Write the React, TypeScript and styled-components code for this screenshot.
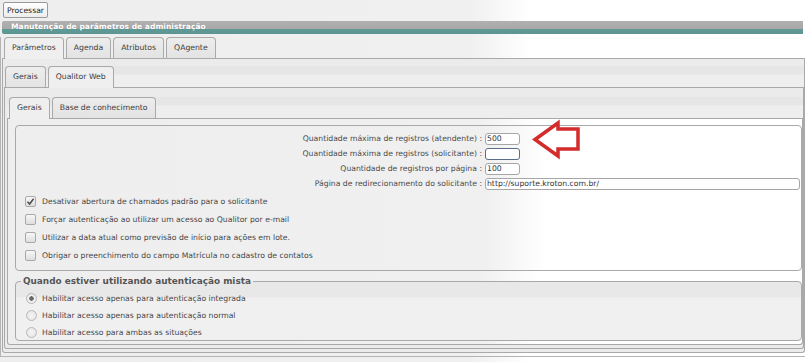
import React from 'react';
import styled, { createGlobalStyle } from 'styled-components';

const Global = createGlobalStyle`
  html, body { margin: 0; padding: 0; background: #ffffff; }
  body {
    font-family: "DejaVu Sans", Verdana, sans-serif;
    font-size: 7.7px;
    color: #444;
    width: 805px;
    height: 362px;
    overflow: hidden;
  }
  * { box-sizing: border-box; }
`;

const pageBg = 'linear-gradient(to right, #eeeeee 0px, #f0f0f0 470px, #ffffff 530px)';

const Page = styled.div`
  width: 805px;
  height: 362px;
  overflow: hidden;
  background: ${pageBg};
`;

const TopBar = styled.div`
  height: 21px;
  padding: 2px 0 0 3px;
`;

const ActionButton = styled.button`
  height: 16px;
  width: 45px;
  padding: 0;
  font-family: "DejaVu Sans", Verdana, sans-serif;
  font-size: 7.7px;
  color: #222;
  background: linear-gradient(#ffffff, #ededed);
  border: 1px solid #9a9a9a;
  border-radius: 2px;
`;

const TitleBar = styled.div`
  margin-left: 2px;
  width: 801px;
  height: 13px;
  background: linear-gradient(#b0b0b0 0, #a8a8a8 8px, #5f9a96 8px, #5c9692 13px);
  border-radius: 2px 0 0 2px;
  color: #fff;
  font-weight: bold;
  font-size: 7.6px;
  line-height: 12px;
  padding-left: 9px;
  text-shadow: 0 0 1px rgba(0, 0, 0, 0.25);
`;

const Frame = styled.div`
  margin-top: 3px;
  border-left: 1px solid #b4b4b4;
  border-bottom: 1px solid #b4b4b4;
  padding-bottom: 3px;
  width: 805px;
`;

const TabGroup = styled.div<{ $inset: number }>`
  margin-left: ${p => p.$inset}px;
`;

const TabStrip = styled.div<{ $plain?: boolean; $pad: number }>`
  display: flex;
  align-items: flex-end;
  gap: 2px;
  height: 22px;
  padding-left: ${p => p.$pad}px;
  border-bottom: 1px solid #a9a9a9;
  background: ${p => (p.$plain ? 'transparent' : 'linear-gradient(#e6e6e6 0, #e6e6e6 8px, #eeeeee 9px, #eeeeee 100%)')};
`;

const Tab = styled.div<{ $active?: boolean }>`
  height: ${p => (p.$active ? 22 : 21)}px;
  margin-bottom: ${p => (p.$active ? -1 : 0)}px;
  padding: 0 7px;
  border: 1px solid #a9a9a9;
  border-bottom: none;
  border-radius: 4px 4px 0 0;
  background: ${p => (p.$active ? '#efefef' : 'linear-gradient(#ededed, #e3e3e3)')};
  color: #3c3c3c;
  line-height: 19px;
  white-space: nowrap;
`;

const PanelBody = styled.div<{ $pt: number; $pb: number; $pl: number; $page?: boolean }>`
  border-left: 1px solid #a9a9a9;
  border-right: 1px solid #a9a9a9;
  border-bottom: 1px solid #a9a9a9;
  border-radius: 0 0 3px 3px;
  padding: ${p => p.$pt}px 0 ${p => p.$pb}px ${p => p.$pl}px;
  background: ${p => (p.$page ? pageBg : '#ebebeb')};
`;

const Box = styled.div`
  position: relative;
  border: 1px solid #a9a9a9;
  border-radius: 4px;
  background: ${pageBg};
  padding: 7px 0 4px 0;
  height: 146px;
`;

const FormGrid = styled.div`
  display: grid;
  grid-template-columns: 469px 1fr;
  row-gap: 3px;
  align-items: center;
`;

const FieldLabel = styled.div`
  text-align: right;
  padding-right: 3px;
  color: #4a4a4a;
  line-height: 12px;
  white-space: nowrap;
`;

const TextInput = styled.div<{ $w?: number; $focus?: boolean }>`
  height: 12px;
  width: ${p => (p.$w ? `${p.$w}px` : 'calc(100% - 1px)')};
  border: 1px solid ${p => (p.$focus ? '#5b6b8a' : '#a6a6a6')};
  border-radius: 3px;
  background: #fff;
  color: #333;
  line-height: 10px;
  padding-left: 1px;
  white-space: nowrap;
`;

const CheckList = styled.div`
  margin-top: 2px;
  padding-left: 9px;
`;

const CheckRow = styled.div`
  display: flex;
  align-items: center;
  height: 18px;
  gap: 6px;
  color: #454545;
`;

const CheckBox = styled.span`
  width: 11px;
  height: 11px;
  border: 1px solid #a8a8a8;
  border-radius: 2px;
  background: linear-gradient(#f7f7f7, #dedede);
  display: inline-flex;
  align-items: center;
  justify-content: center;
`;

const Arrow = styled.svg`
  position: absolute;
  left: 513px;
  top: -7px;
`;

const FieldSet = styled.fieldset`
  margin: 4px 0 0 0;
  padding: 3px 0 0 10px;
  min-width: 0;
  border: 1px solid #a9a9a9;
  border-radius: 4px;
  background: linear-gradient(#e8e8e8 0, #e8e8e8 15px, #f0f0f0 16px, #f0f0f0 100%);
  height: 66px;
`;

const Legend = styled.legend`
  margin-left: -5px;
  padding: 0 2px;
  font-weight: bold;
  font-size: 8.9px;
  color: #555;
  line-height: 12px;
`;

const RadioRow = styled.div`
  display: flex;
  align-items: center;
  height: 17px;
  gap: 5px;
  color: #454545;
`;

const Radio = styled.span<{ $on?: boolean }>`
  width: 11px;
  height: 11px;
  border: 1px solid #b8b8b8;
  border-radius: 50%;
  background: radial-gradient(circle at 50% 50%, ${p => (p.$on ? '#6a6a6a 0, #6a6a6a 2px, #f3f3f3 2.5px' : '#f5f5f5 0')}, #e2e2e2 100%);
`;

const Check = () => (
  <svg width="9" height="9" viewBox="0 0 9 9">
    <path d="M1.5 4.8 L3.6 7 L7.6 1.8" fill="none" stroke="#4d4d4d" strokeWidth="1.6" />
  </svg>
);

const fields: { label: string; value: string; w?: number; focus?: boolean }[] = [
  { label: 'Quantidade máxima de registros (atendente) :', value: '500', w: 35 },
  { label: 'Quantidade máxima de registros (solicitante) :', value: '', w: 35, focus: true },
  { label: 'Quantidade de registros por página :', value: '100', w: 35 },
  { label: 'Página de redirecionamento do solicitante :', value: 'http://suporte.kroton.com.br/' },
];

const checks = [
  { label: 'Desativar abertura de chamados padrão para o solicitante', on: true },
  { label: 'Forçar autenticação ao utilizar um acesso ao Qualitor por e-mail', on: false },
  { label: 'Utilizar a data atual como previsão de início para ações em lote.', on: false },
  { label: 'Obrigar o preenchimento do campo Matrícula no cadastro de contatos', on: false },
];

const radios = [
  { label: 'Habilitar acesso apenas para autenticação integrada', on: true },
  { label: 'Habilitar acesso apenas para autenticação normal', on: false },
  { label: 'Habilitar acesso para ambas as situações', on: false },
];

export default function App() {
  return (
    <Page>
      <Global />
      <TopBar>
        <ActionButton>Processar</ActionButton>
      </TopBar>
      <TitleBar>Manutenção de parâmetros de administração</TitleBar>
      <Frame>
        <TabGroup $inset={1}>
          <TabStrip $plain $pad={2}>
            <Tab $active>Parâmetros</Tab>
            <Tab>Agenda</Tab>
            <Tab>Atributos</Tab>
            <Tab>QAgente</Tab>
          </TabStrip>
          <PanelBody $pt={7} $pb={3} $pl={1}>
            <TabGroup $inset={0}>
              <TabStrip $pad={1}>
                <Tab>Gerais</Tab>
                <Tab $active>Qualitor Web</Tab>
              </TabStrip>
              <PanelBody $pt={9} $pb={3} $pl={2}>
                <TabGroup $inset={0}>
                  <TabStrip $pad={2}>
                    <Tab $active>Gerais</Tab>
                    <Tab>Base de conhecimento</Tab>
                  </TabStrip>
                  <PanelBody $pt={6} $pb={3} $pl={7} $page>
                    <Box>
                      <FormGrid>
                        {fields.map(f => (
                          <React.Fragment key={f.label}>
                            <FieldLabel>{f.label}</FieldLabel>
                            <TextInput $w={f.w} $focus={f.focus}>{f.value}</TextInput>
                          </React.Fragment>
                        ))}
                      </FormGrid>
                      <CheckList>
                        {checks.map(c => (
                          <CheckRow key={c.label}>
                            <CheckBox>{c.on && <Check />}</CheckBox>
                            <span>{c.label}</span>
                          </CheckRow>
                        ))}
                      </CheckList>
                      <Arrow width="54" height="42" viewBox="0 0 54 42">
                        <path
                          d="M6 20.5 L29 4 L29 10 L49 10 L49 30 L29 30 L29 37 Z"
                          fill="none"
                          stroke="#d42b2b"
                          strokeWidth="3.5"
                          strokeLinejoin="miter"
                        />
                      </Arrow>
                    </Box>
                    <FieldSet>
                      <Legend>Quando estiver utilizando autenticação mista</Legend>
                      {radios.map(r => (
                        <RadioRow key={r.label}>
                          <Radio $on={r.on} />
                          <span>{r.label}</span>
                        </RadioRow>
                      ))}
                    </FieldSet>
                  </PanelBody>
                </TabGroup>
              </PanelBody>
            </TabGroup>
          </PanelBody>
        </TabGroup>
      </Frame>
    </Page>
  );
}
